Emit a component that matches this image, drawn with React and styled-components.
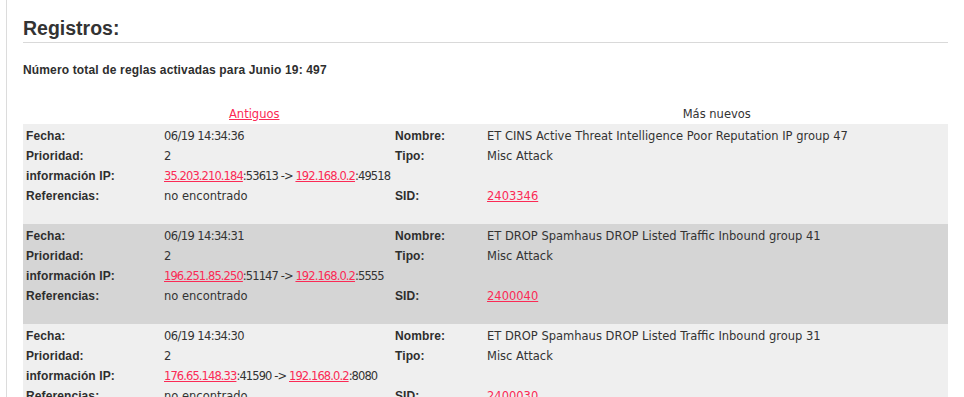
import React from "react";
import styled, { createGlobalStyle } from "styled-components";

const Global = createGlobalStyle`
  html, body { margin: 0; padding: 0; background: #fff; overflow: hidden; }
  body { font-family: "DejaVu Sans", sans-serif; color: #333; }
`;

const Page = styled.div`
  margin-left: 6px;
  border-left: 1px solid #dcdcdc;
  padding: 16px 16px 0 16px;
  min-height: 100vh;
`;

const Title = styled.h2`
  margin: 0;
  font-family: "Liberation Sans", Arial, sans-serif;
  font-weight: 700;
  font-size: 19.5px;
  line-height: 24px;
  color: #333;
  padding-bottom: 2px;
  border-bottom: 1px solid #d9d9d9;
`;

const Summary = styled.p`
  margin: 19px 0 0;
  font-family: "Liberation Sans", Arial, sans-serif;
  font-weight: 700;
  font-size: 12px;
  letter-spacing: 0.15px;
  line-height: 16px;
  color: #2e2e2e;
`;

const Nav = styled.div`
  display: grid;
  grid-template-columns: 1fr 1fr;
  margin-top: 26px;
  font-size: 11.5px;
  line-height: 20px;
  text-align: center;
  color: #333;
`;

const Link = styled.a`
  color: #fb2a55;
  text-decoration: underline;
  cursor: pointer;
`;

const Entry = styled.div`
  display: grid;
  grid-template-columns: 138px 231px 92px 1fr;
  grid-auto-rows: 20px;
  padding: 2px 0 18px;
  background: ${(p) => (p.$alt ? "#d5d5d5" : "#efefef")};
`;

const Label = styled.div`
  padding: 0 3px;
  font-family: "Liberation Sans", Arial, sans-serif;
  font-weight: 700;
  font-size: 12px;
  letter-spacing: 0.1px;
  line-height: 20px;
  color: #2e2e2e;
  white-space: nowrap;
`;

const Value = styled.div`
  padding: 0 3px;
  font-size: 11.5px;
  line-height: 20px;
  color: #333;
  white-space: nowrap;
  letter-spacing: ${(p) => p.$tight || 0}px;
`;

const entries = [
  {
    fecha: "06/19 14:34:36",
    nombre: "ET CINS Active Threat Intelligence Poor Reputation IP group 47",
    src: "35.203.210.184",
    sport: "53613",
    dst: "192.168.0.2",
    dport: "49518",
    sid: "2403346",
  },
  {
    fecha: "06/19 14:34:31",
    nombre: "ET DROP Spamhaus DROP Listed Traffic Inbound group 41",
    src: "196.251.85.250",
    sport: "51147",
    dst: "192.168.0.2",
    dport: "5555",
    sid: "2400040",
  },
  {
    fecha: "06/19 14:34:30",
    nombre: "ET DROP Spamhaus DROP Listed Traffic Inbound group 31",
    src: "176.65.148.33",
    sport: "41590",
    dst: "192.168.0.2",
    dport: "8080",
    sid: "2400030",
  },
];

export default function App() {
  return (
    <>
      <Global />
      <Page>
        <Title>Registros:</Title>
        <Summary>Número total de reglas activadas para Junio 19: 497</Summary>
        <Nav>
          <div>
            <Link>Antiguos</Link>
          </div>
          <div>Más nuevos</div>
        </Nav>
        {entries.map((e, i) => (
          <Entry key={i} $alt={i % 2 === 1}>
            <Label>Fecha:</Label>
            <Value $tight={-0.6}>{e.fecha}</Value>
            <Label>Nombre:</Label>
            <Value>{e.nombre}</Value>

            <Label>Prioridad:</Label>
            <Value>2</Value>
            <Label>Tipo:</Label>
            <Value>Misc Attack</Value>

            <Label>información IP:</Label>
            <Value $tight={-0.9}>
              <Link>{e.src}</Link>:{e.sport} -&gt; <Link>{e.dst}</Link>:{e.dport}
            </Value>
            <Label />
            <Value />

            <Label>Referencias:</Label>
            <Value>no encontrado</Value>
            <Label>SID:</Label>
            <Value>
              <Link>{e.sid}</Link>
            </Value>
          </Entry>
        ))}
      </Page>
    </>
  );
}
